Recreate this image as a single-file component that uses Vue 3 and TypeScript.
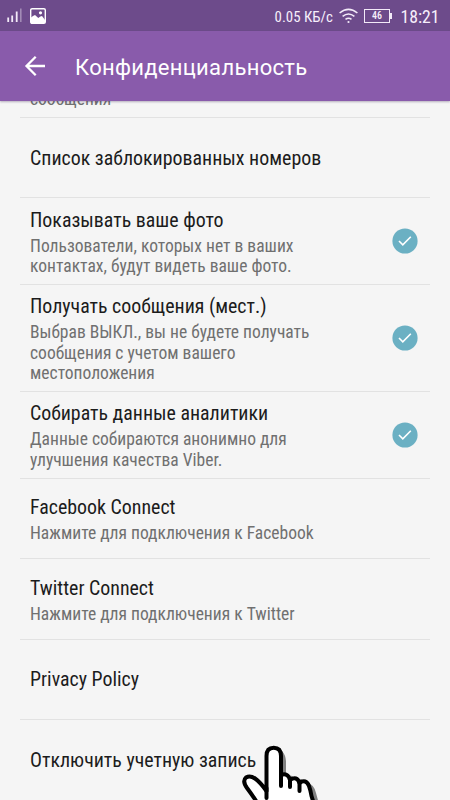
<script setup lang="ts">
interface Setting {
  title: string
  lines?: string[]
  checked?: boolean
  size: string
}

const settings: Setting[] = [
  { title: 'Список заблокированных номеров', size: 'single' },
  {
    title: 'Показывать ваше фото',
    lines: ['Пользователи, которых нет в ваших', 'контактах, будут видеть ваше фото.'],
    checked: true,
    size: 'double',
  },
  {
    title: 'Получать сообщения (мест.)',
    lines: ['Выбрав ВЫКЛ., вы не будете получать', 'сообщения с учетом вашего', 'местоположения'],
    checked: true,
    size: 'triple',
  },
  {
    title: 'Собирать данные аналитики',
    lines: ['Данные собираются анонимно для', 'улучшения качества Viber.'],
    checked: true,
    size: 'double',
  },
  { title: 'Facebook Connect', lines: ['Нажмите для подключения к Facebook'], size: 'single' },
  { title: 'Twitter Connect', lines: ['Нажмите для подключения к Twitter'], size: 'single' },
  { title: 'Privacy Policy', size: 'single' },
  { title: 'Отключить учетную запись', size: 'single' },
]
</script>

<template>
  <div class="screen">
    <header class="status">
      <svg class="signal" width="16" height="16" viewBox="0 0 16 16" fill="#f3eaf8">
        <rect x="0.3" y="9.5" width="1.8" height="4.5" />
        <rect x="4.3" y="7.5" width="1.8" height="6.5" />
        <rect x="8.8" y="3.5" width="1.8" height="10.5" />
        <rect x="13" y="0.5" width="1.6" height="13.5" opacity="0.4" />
      </svg>
      <svg class="picture" width="16" height="16" viewBox="0 0 16 16">
        <rect x="0.7" y="0.7" width="14.6" height="14.6" rx="1.4" fill="none" stroke="#fff" stroke-width="1.4" />
        <path d="M1 9.5L3 8l2-1 3.3 3 2-1.5L12 8l3 4v3H1z" fill="#fff" />
        <circle cx="10.5" cy="4.8" r="1.6" fill="#fff" />
      </svg>
      <span class="speed">0.05 КБ/с</span>
      <svg class="wifi" width="19" height="16" viewBox="0 0 19 16" fill="none" stroke="#f3eaf8" stroke-width="1.6">
        <path d="M0.6 5Q9.5-2.4 18.4 5" />
        <path d="M3.6 8.3Q9.5 3.6 15.4 8.3" />
        <path d="M6.5 11.4Q9.5 9 12.5 11.4" />
        <circle cx="9.5" cy="14" r="1.1" fill="#f3eaf8" stroke="none" />
      </svg>
      <span class="battery">46</span>
      <span class="clock">18:21</span>
    </header>
    <nav class="bar">
      <svg class="back" width="22" height="22" viewBox="0 0 22 22" fill="none" stroke="#fff" stroke-width="2.3">
        <path d="M21 11H3M11.7 1.7L2.5 11l9.2 9.3" />
      </svg>
      <h1>Конфиденциальность</h1>
    </nav>
    <main class="list">
      <div class="clipped"><span>сообщения</span></div>
      <section v-for="s in settings" :key="s.title" class="row" :class="s.size">
        <div class="copy">
          <div class="title">{{ s.title }}</div>
          <div v-if="s.lines" class="lines">
            <div v-for="line in s.lines" :key="line" class="line">{{ line }}</div>
          </div>
        </div>
        <svg v-if="s.checked" class="check" width="26" height="26" viewBox="0 0 26 26">
          <circle cx="13" cy="13" r="12.6" fill="#6bb0c3" />
          <path d="M7 13l3.8 3.8 8-8" fill="none" stroke="#fff" stroke-width="1.6" />
        </svg>
      </section>
    </main>
    <svg class="hand" width="80" height="56" viewBox="0 0 80 56" stroke-linejoin="round" stroke-linecap="round">
      <path d="M34 4Q45 5 46 17V32Q53 30 56 36Q62 33 67 39Q74 40 76 49L79 60H34z" fill="#808080" />
      <path
        d="M18 60Q13 52 7 44Q2 37 6 33.5Q10 31 15 34.5Q20 38 26.5 47V12Q26.5 3.7 33.7 3.7Q41 3.7 41 12V31Q48 28.5 50 36Q57 31.5 59.5 39Q66 34.5 69 42Q70.5 46 71.5 52L74 60z"
        fill="#fff" stroke="#000" stroke-width="4"
      />
      <path d="M26.5 44V54M41 30V42M50 35V43M59.5 38V47" fill="none" stroke="#000" stroke-width="4" />
    </svg>
  </div>
</template>

<style>
body {
  margin: 0;
  overflow: hidden;
}
</style>

<style scoped>
.screen {
  position: relative;
  width: 450px;
  height: 800px;
  overflow: hidden;
  background: #f5f5f5;
  font-family: 'Roboto Condensed', Roboto, sans-serif;
  font-stretch: 75%;
  white-space: nowrap;
}
.status {
  box-sizing: border-box;
  display: flex;
  align-items: center;
  height: 31px;
  padding: 0 10.5px 0 7px;
  background: #6d4b8b;
  color: #f7effb;
}
.picture {
  margin-left: 7px;
}
.speed {
  margin-left: auto;
  padding-top: 2px;
  font-size: 14.9px;
}
.wifi {
  margin-left: 6px;
}
.battery {
  position: relative;
  box-sizing: border-box;
  width: 26px;
  height: 14px;
  margin: 0 10.5px 0 6px;
  border: 1px solid #f3eaf8;
  text-align: center;
  font-size: 10px;
  font-weight: 500;
  line-height: 12px;
}
.battery::after {
  content: '';
  position: absolute;
  right: -3px;
  top: 3px;
  width: 2px;
  height: 6px;
  background: #f3eaf8;
}
.clock {
  padding-top: 2px;
  font-size: 17.7px;
}
.bar {
  position: relative;
  z-index: 1;
  display: flex;
  align-items: center;
  height: 70px;
  padding-left: 24px;
  background: #895bab;
  box-shadow: 0 1px 2px rgba(60, 40, 80, 0.35);
}
h1 {
  margin: 0 0 0 29px;
  padding-top: 4px;
  color: #fff;
  font: 400 22px/30px Roboto, sans-serif;
  letter-spacing: 0.3px;
}
.list {
  padding: 0 20px;
}
.clipped {
  box-sizing: border-box;
  display: flex;
  align-items: flex-start;
  height: 17px;
  padding-left: 10px;
  border-bottom: 1px solid #e2e2e2;
  color: #707070;
  font-size: 17.5px;
  line-height: 20.5px;
}
.clipped span {
  margin-top: -12px;
}
.row {
  box-sizing: border-box;
  display: flex;
  align-items: center;
  justify-content: space-between;
  height: 80.4px;
  padding: 0 12px 0 10px;
  border-bottom: 1px solid #e2e2e2;
}
.double {
  height: 86.8px;
}
.triple {
  height: 107px;
}
.copy {
  padding-top: 2px;
}
.title {
  height: 26px;
  color: #1c1c1c;
  font-size: 19.9px;
  line-height: 26px;
}
.lines {
  padding-top: 2px;
}
.line {
  height: 20.6px;
  color: #707070;
  font-size: 17.55px;
  line-height: 20.6px;
}
.hand {
  position: absolute;
  left: 240px;
  top: 744px;
}
</style>
